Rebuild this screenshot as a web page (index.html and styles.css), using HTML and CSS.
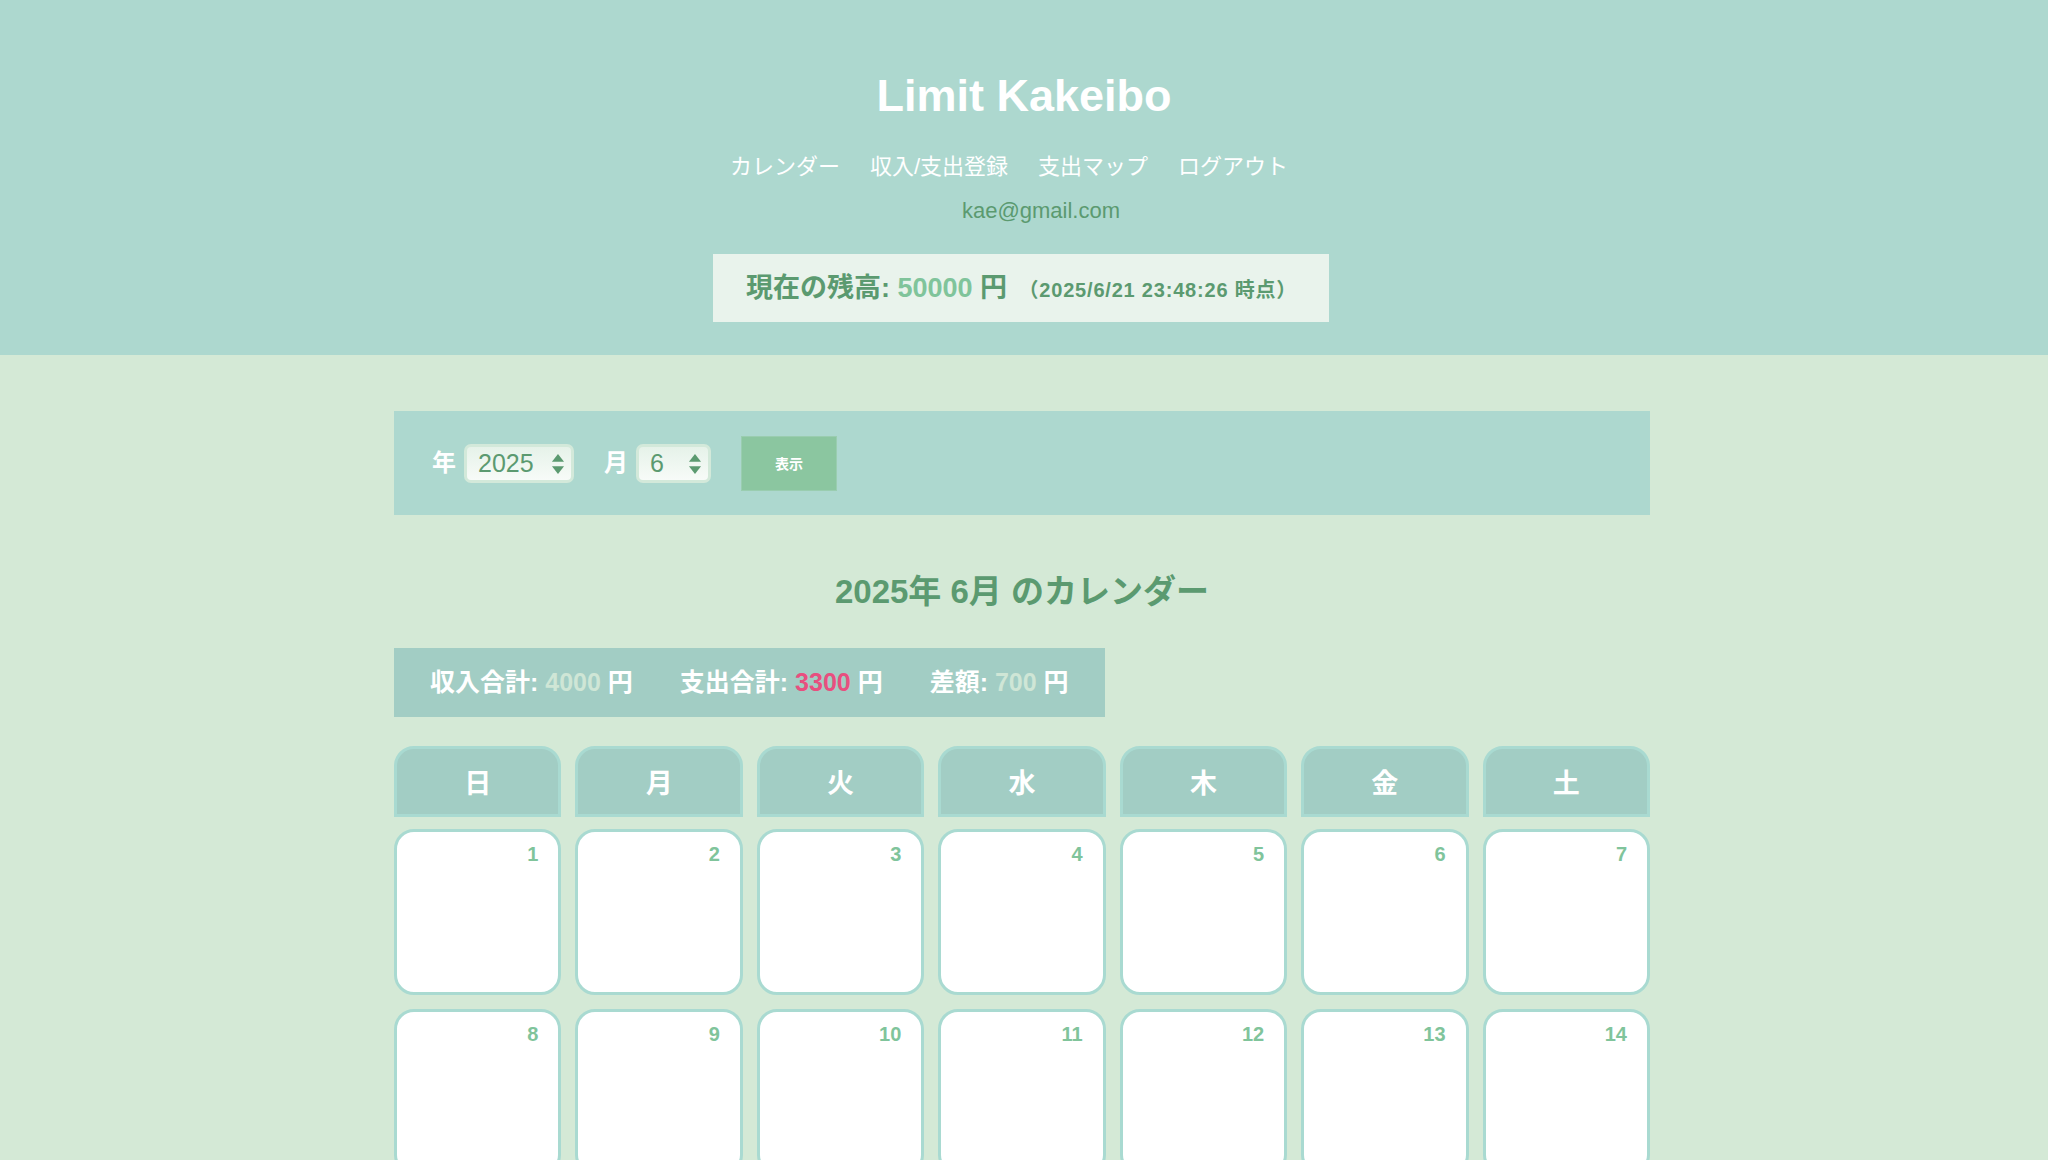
FILE: index.html
```html
<!DOCTYPE html>
<html lang="ja">
<head>
    <meta charset="UTF-8">
    <meta name="viewport" content="width=device-width, initial-scale=1.0">
    <title>Limit Kakeibo</title>
    <link rel="stylesheet" href="styles.css">
</head>
<body>
    <header class="site-header">
        <h1>Limit Kakeibo</h1>
        <nav class="nav">
            <a href="#">カレンダー</a>
            <a href="#">収入/支出登録</a>
            <a href="#">支出マップ</a>
            <a href="#">ログアウト</a>
        </nav>
        <p class="user-email">kae@gmail.com</p>
        <div class="balance">現在の残高: <span class="balance-value">50000</span> 円 <small class="balance-time">（2025/6/21 23:48:26 時点）</small></div>
    </header>

    <main class="container">
        <form class="month-form" onsubmit="return false;">
            <label for="year">年</label>
            <span class="select-wrap year">
                <select id="year">
                    <option>2024</option>
                    <option selected>2025</option>
                    <option>2026</option>
                </select>
                <svg class="arrows" width="12" height="20" viewBox="0 0 12 20"><polygon points="6,1 11.5,8 0.5,8"/><polygon points="0.5,12 11.5,12 6,19"/></svg>
            </span>
            <label for="month">月</label>
            <span class="select-wrap month">
                <select id="month">
                    <option>5</option>
                    <option selected>6</option>
                    <option>7</option>
                </select>
                <svg class="arrows" width="12" height="20" viewBox="0 0 12 20"><polygon points="6,1 11.5,8 0.5,8"/><polygon points="0.5,12 11.5,12 6,19"/></svg>
            </span>
            <button class="show-btn">表示</button>
        </form>

        <h2 class="cal-title">2025年 6月 のカレンダー</h2>

        <div class="summary">
            <span class="sum-item">収入合計: <span class="sum-plain">4000</span> 円</span>
            <span class="sum-item">支出合計: <span class="sum-out">3300</span> 円</span>
            <span class="sum-item">差額: <span class="sum-plain">700</span> 円</span>
        </div>

        <div class="weekdays">
            <div>日</div><div>月</div><div>火</div><div>水</div><div>木</div><div>金</div><div>土</div>
        </div>
        <div class="days" id="days"></div>
    </main>

    <script>
        // June 2025 starts on Sunday
        let days = document.getElementById("days");
        for (let d = 1; d <= 30; d++) {
            let cell = document.createElement("div");
            cell.className = "day";
            cell.innerHTML = '<span class="day-num">' + d + '</span>';
            days.appendChild(cell);
        }
    </script>
</body>
</html>
```

FILE: styles.css
```css
body {
    font-family: "Liberation Sans", "Noto Sans CJK JP", sans-serif;
    background-color: #d4e9d6;
    margin: 0;
    color: #5b9a70;
}
.site-header {
    background: #add8cf;
    padding: 71px 0 33px;
    text-align: center;
}
.site-header h1 {
    margin: 0;
    font-size: 45px;
    line-height: 50px;
    color: white;
}
.nav {
    margin-top: 31px;
    line-height: 30px;
    display: flex;
    justify-content: center;
    gap: 30px;
    padding-right: 30px;
}
.nav a {
    color: white;
    text-decoration: none;
    font-size: 22px;
}
.user-email {
    margin: 14px 0 0;
    padding-left: 34px;
    font-size: 22px;
    line-height: 30px;
}
.balance {
    display: inline-block;
    margin: 28px 6px 0 0;
    padding: 0 32px 0 33px;
    height: 68px;
    line-height: 68px;
    background: #e9f3ec;
    font-size: 27px;
    font-weight: bold;
    white-space: nowrap;
}
.balance-value {
    color: #80c49b;
}
.balance-time {
    font-size: 20px;
    letter-spacing: 0.8px;
    margin-left: 4px;
}
.container {
    width: 1256px;
    margin: 56px 0 0 calc(50% - 630px);
}
.month-form {
    background: #add8cf;
    height: 104px;
    padding: 0 38px;
    display: flex;
    align-items: center;
    box-sizing: border-box;
}
.month-form label {
    color: white;
    font-weight: bold;
    font-size: 24px;
    margin-right: 8px;
    padding-bottom: 5px;
}
.select-wrap {
    position: relative;
    display: inline-block;
    margin-right: 30px;
}
.select-wrap select {
    appearance: none;
    -webkit-appearance: none;
    height: 39px;
    border: 3px solid #d3e9da;
    border-radius: 7px;
    background: linear-gradient(#e6f2e9, #f7fbf8);
    color: #5b9a70;
    font-family: "Liberation Sans", sans-serif;
    font-size: 25px;
    padding: 0 0 0 11px;
    outline: none;
}
.year select {
    width: 110px;
}
.month select {
    width: 75px;
}
.select-wrap .arrows {
    position: absolute;
    right: 9px;
    top: 9px;
    width: 14px;
    height: 22px;
    fill: #5b9a70;
    pointer-events: none;
}
.show-btn {
    width: 96px;
    height: 55px;
    background: #8bc6a0;
    border: 1px solid #9acdb0;
    color: white;
    font-weight: bold;
    font-size: 14px;
    font-family: "Liberation Sans", "Noto Sans CJK JP", sans-serif;
    cursor: pointer;
}
.show-btn:hover {
    background: #7fbb95;
}
.cal-title {
    margin: 57px 0 0;
    text-align: center;
    font-size: 33px;
    line-height: 40px;
    color: #5b9a70;
}
.summary {
    display: inline-block;
    margin-top: 36px;
    padding: 0 36px;
    height: 69px;
    line-height: 69px;
    background: #a2cdc4;
    color: white;
    font-weight: bold;
    font-size: 25px;
}
.sum-item {
    margin-right: 40px;
}
.sum-item:last-child {
    margin-right: 0;
}
.sum-plain {
    color: #cfe6d6;
}
.sum-out {
    color: #e84f7f;
}
.weekdays, .days {
    display: grid;
    grid-template-columns: repeat(7, 1fr);
    gap: 14px;
}
.weekdays {
    margin-top: 29px;
    margin-bottom: 12px;
}
.weekdays div {
    height: 71px;
    box-sizing: border-box;
    background: #a2cdc4;
    border: 3px solid #a9dad1;
    border-radius: 20px 20px 0 0;
    color: white;
    font-weight: bold;
    font-size: 27px;
    display: flex;
    align-items: center;
    justify-content: center;
}
.day {
    height: 166px;
    box-sizing: border-box;
    background: white;
    border: 3px solid #a9dad1;
    border-radius: 20px;
    padding: 10px 20px;
    text-align: right;
}
.day-num {
    color: #80c49b;
    font-weight: bold;
    font-size: 20px;
    line-height: 24px;
}
```
